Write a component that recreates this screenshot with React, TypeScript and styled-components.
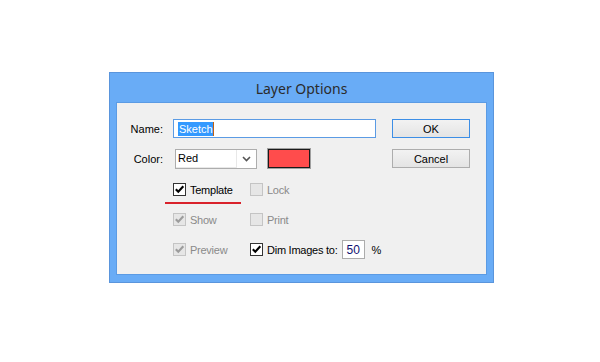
import React from "react";
import styled, { createGlobalStyle } from "styled-components";

const Global = createGlobalStyle`
  html, body { margin: 0; padding: 0; background: #ffffff; }
  body { font-family: "Liberation Sans", Arial, sans-serif; }
`;

const Page = styled.div`
  width: 600px;
  height: 362px;
  padding: 72px 0 0 109px;
  box-sizing: border-box;
`;

const Dialog = styled.div`
  width: 385px;
  height: 211px;
  box-sizing: border-box;
  background: #69acf6;
  border: 1px solid #5a95dc;
  display: flex;
  flex-direction: column;
  padding: 0 6px 7px 6px;
`;

const Title = styled.div`
  height: 29px;
  display: flex;
  align-items: center;
  justify-content: center;
  font-family: "Noto Sans", "Open Sans", sans-serif;
  font-size: 14px;
  color: #2b2b2b;
  padding-top: 1px;
  box-sizing: border-box;
`;

const Panel = styled.div`
  flex: 1;
  background: #f0f0f0;
  border: 1px solid #5b9be4;
  display: flex;
  justify-content: space-between;
  padding: 16px 16px 0 0;
  font-size: 11px;
  color: #000;
`;

const Form = styled.div`
  display: flex;
  flex-direction: column;
`;

const FieldRow = styled.div<{ $h: number; $mb: number }>`
  display: flex;
  align-items: center;
  height: ${(p) => p.$h}px;
  margin-bottom: ${(p) => p.$mb}px;
`;

const Label = styled.div`
  width: 46px;
  text-align: right;
  margin-right: 10px;
  color: #000;
`;

const TextField = styled.div`
  width: 203px;
  height: 19px;
  box-sizing: border-box;
  border: 1px solid #5b9be4;
  background: #fff;
  display: flex;
  align-items: center;
  padding-left: 4px;
`;

const Selected = styled.span`
  background: #3399ff;
  color: #fff;
  line-height: 14px;
  padding: 0 0 0 1px;
`;

const Caret = styled.span`
  width: 1px;
  height: 14px;
  background: #c06010;
`;

const Select = styled.div`
  width: 82px;
  height: 20px;
  margin-left: 2px;
  box-sizing: border-box;
  border: 1px solid #adadad;
  background: #fff;
  display: flex;
`;

const SelectText = styled.div`
  width: 61px;
  border-right: 1px solid #e8e8e8;
  border-bottom: 1px solid #e8e8e8;
  display: flex;
  align-items: center;
  padding-left: 2px;
  box-sizing: border-box;
`;

const SelectArrow = styled.div`
  flex: 1;
  display: flex;
  align-items: center;
  justify-content: center;
`;

const Swatch = styled.div`
  width: 44px;
  height: 21px;
  margin-left: 10px;
  box-sizing: border-box;
  border: 1px solid #a0a0a0;
  display: flex;
`;

const SwatchFill = styled.div`
  flex: 1;
  border: 1px solid #1a1a1a;
  background: #ff4c4c;
`;

const Checks = styled.div`
  display: grid;
  grid-template-columns: 77px auto;
  grid-auto-rows: 13px;
  row-gap: 17px;
  margin-left: 56px;
`;

const CheckItem = styled.div<{ $disabled?: boolean }>`
  position: relative;
  display: flex;
  align-items: center;
  color: ${(p) => (p.$disabled ? "#8a8a8a" : "#000")};
  white-space: nowrap;
  letter-spacing: -0.25px;
`;

const Box = styled.div<{ $disabled?: boolean }>`
  width: 13px;
  height: 13px;
  box-sizing: border-box;
  border: 1px solid ${(p) => (p.$disabled ? "#c4c4c4" : "#333")};
  background: ${(p) => (p.$disabled ? "#e6e6e6" : "#fff")};
  margin-right: 4px;
  display: flex;
  align-items: center;
  justify-content: center;
`;

const Underline = styled.div`
  position: absolute;
  left: -8px;
  top: 19px;
  width: 76px;
  height: 2px;
  background: #d9222b;
`;

const NumField = styled.div`
  width: 23px;
  height: 19px;
  box-sizing: border-box;
  border: 1px solid #acacac;
  background: #fff;
  margin-left: 5px;
  display: flex;
  align-items: center;
  padding-left: 3px;
  color: #101070;
  font-size: 12px;
  letter-spacing: 0;
`;

const Percent = styled.span`
  margin-left: 6px;
`;

const Buttons = styled.div`
  display: flex;
  flex-direction: column;
  gap: 11px;
`;

const Button = styled.div<{ $primary?: boolean }>`
  width: 78px;
  height: 19px;
  box-sizing: border-box;
  border: 1px solid ${(p) => (p.$primary ? "#3c8ee6" : "#adadad")};
  background: linear-gradient(#f2f2f2, #e4e4e4);
  display: flex;
  align-items: center;
  justify-content: center;
  font-size: 11px;
  color: #000;
`;

const Check = ({ color }: { color: string }) => (
  <svg width="11" height="11" viewBox="0 0 11 11">
    <path d="M1.8 5.2 L4.3 7.8 L9.3 2.2" fill="none" stroke={color} strokeWidth="2.1" />
  </svg>
);

const CheckBox = ({
  label,
  checked,
  disabled,
  children,
}: {
  label: string;
  checked?: boolean;
  disabled?: boolean;
  children?: React.ReactNode;
}) => (
  <CheckItem $disabled={disabled}>
    <Box $disabled={disabled}>{checked && <Check color={disabled ? "#9c9c9c" : "#000"} />}</Box>
    {label}
    {children}
  </CheckItem>
);

export default function App() {
  return (
    <>
      <Global />
      <Page>
        <Dialog>
          <Title>Layer Options</Title>
          <Panel>
            <Form>
              <FieldRow $h={19} $mb={10}>
                <Label>Name:</Label>
                <TextField>
                  <Selected>Sketch</Selected>
                  <Caret />
                </TextField>
              </FieldRow>
              <FieldRow $h={21} $mb={14}>
                <Label>Color:</Label>
                <Select>
                  <SelectText>Red</SelectText>
                  <SelectArrow>
                    <svg width="9" height="6" viewBox="0 0 9 6">
                      <path d="M1 1 L4.5 4.5 L8 1" fill="none" stroke="#555" strokeWidth="1.6" />
                    </svg>
                  </SelectArrow>
                </Select>
                <Swatch>
                  <SwatchFill />
                </Swatch>
              </FieldRow>
              <Checks>
                <CheckBox label="Template" checked>
                  <Underline />
                </CheckBox>
                <CheckBox label="Lock" disabled />
                <CheckBox label="Show" checked disabled />
                <CheckBox label="Print" disabled />
                <CheckBox label="Preview" checked disabled />
                <CheckBox label="Dim Images to:" checked>
                  <NumField>50</NumField>
                  <Percent>%</Percent>
                </CheckBox>
              </Checks>
            </Form>
            <Buttons>
              <Button $primary>OK</Button>
              <Button>Cancel</Button>
            </Buttons>
          </Panel>
        </Dialog>
      </Page>
    </>
  );
}
